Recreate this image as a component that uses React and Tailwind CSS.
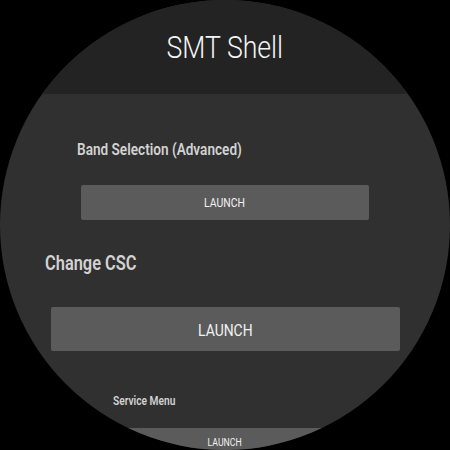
const items = [
  { label: 'Band Selection (Advanced)' },
]

function LaunchButton({ className, textClass }) {
  return (
    <button
      type="button"
      className={`mx-auto flex items-center justify-center rounded-[2px] bg-[#5b5b5b] text-[#f2f2f2] ${className}`}
    >
      <span className={`inline-block scale-x-[0.87] ${textClass}`}>LAUNCH</span>
    </button>
  )
}

export default function App() {
  return (
    <div className="h-[450px] w-[450px] bg-black font-['Roboto',sans-serif]">
      <div className="flex h-[450px] w-[450px] flex-col overflow-hidden rounded-full bg-[#303030]">
        <header className="flex h-[94px] shrink-0 items-start justify-center bg-[#232323] pt-[30px]">
          <h1 className="scale-x-[0.86] text-[31px] font-light leading-[36px] text-[#f4f4f4]">SMT Shell</h1>
        </header>

        <div className="pt-[46px]">
          <p className="pl-[77px] text-[16px] font-semibold leading-[20px] text-[#d2d2d2]">
            <span className="inline-block origin-left scale-x-[0.85]">{items[0].label}</span>
          </p>
          <LaunchButton
            className="mt-[25px] h-[35px] w-[288px]"
            textClass="text-[12px] leading-[14px]"
          />

          <p className="mt-[31px] pl-[45px] text-[20px] font-semibold leading-[24px] text-[#d2d2d2]">
            <span className="inline-block origin-left scale-x-[0.82]">Change CSC</span>
          </p>
          <LaunchButton
            className="mt-[32px] h-[44px] w-[349px] pt-[3px]"
            textClass="text-[16px] leading-[18px]"
          />

          <p className="mt-[43px] pl-[113px] text-[12px] font-semibold leading-[14px] text-[#d2d2d2]">
            <span className="inline-block origin-left scale-x-[0.85]">Service Menu</span>
          </p>
          <LaunchButton
            className="mt-[20px] h-[30px] w-[216px] items-start pt-[9px]"
            textClass="text-[10px] leading-[12px]"
          />
        </div>
      </div>
    </div>
  )
}
